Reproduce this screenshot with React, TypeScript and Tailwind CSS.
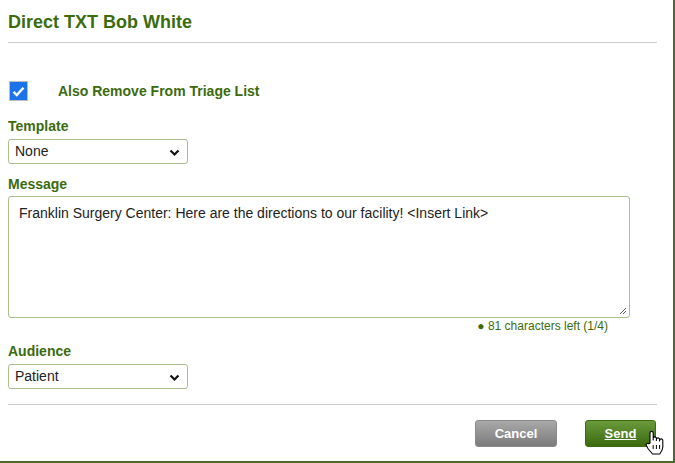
import React from 'react';

const green = 'text-[#3b6b0c]';

const Chevron = () => (
  <svg width="11" height="8" viewBox="0 0 11 8" className="absolute right-[7px] top-[9px]">
    <path d="M1.5 1.5 L5.5 5.5 L9.5 1.5" fill="none" stroke="#111" strokeWidth="2.2" />
  </svg>
);

const SelectBox = ({ value }: { value: string }) => (
  <div className="relative w-[180px] h-[25px] border border-[#a8bf8e] rounded-[3px] bg-white flex items-center pl-[6px] text-[14px] text-[#222]">
    {value}
    <Chevron />
  </div>
);

const HandCursor = () => (
  <svg width="20" height="26" viewBox="0 0 20 26" className="absolute left-[645px] top-[430px]">
    <path
      d="M5 13 V3 a1.6 1.6 0 0 1 3.2 0 V10 V8.5 a1.6 1.6 0 0 1 3.2 0 V10.5 V9.5 a1.6 1.6 0 0 1 3.2 0 V11 V10.5 a1.6 1.6 0 0 1 3.2 0 V17 c0 3 -1.5 5 -3 7 H7.5 c-1.5 -2 -3 -3.5 -4.5 -5.5 L1.3 15.5 a1.5 1.5 0 0 1 2.4 -1.7 Z"
      fill="#fff"
      stroke="#000"
      strokeWidth="1.1"
      strokeLinejoin="round"
    />
    <path d="M8.2 15 V19 M11.4 15 V19 M14.6 15 V19" stroke="#000" strokeWidth="1" />
  </svg>
);

export default function App() {
  return (
    <div
      className="relative w-[675px] h-[463px] bg-white border-r-2 border-b-2 border-[#4b6a2c] overflow-hidden"
      style={{ fontFamily: '"Liberation Sans", Arial, sans-serif' }}
    >
      <div className="pl-[8px] pr-[16px]">
        <h1 className={`pt-[9px] h-[42px] text-[18px] font-bold ${green}`}>Direct TXT Bob White</h1>
        <div className="border-t border-[#cccccc]" />

        <div className="mt-[38px] flex items-center h-[20px]">
          <div className="ml-[1px] w-[19px] h-[20px] border border-[#bdbdbd] bg-[#1a73e8] flex items-center justify-center">
            <svg width="13" height="11" viewBox="0 0 13 11">
              <path d="M1.5 5.8 L4.8 9 L11.5 1.8" fill="none" stroke="#fff" strokeWidth="2.4" />
            </svg>
          </div>
          <span className={`ml-[30px] text-[14px] font-bold ${green}`}>Also Remove From Triage List</span>
        </div>

        <div className={`mt-[16px] text-[14px] font-bold ${green} leading-[18px]`}>Template</div>
        <div className="mt-[4px]">
          <SelectBox value="None" />
        </div>

        <div className={`mt-[11px] text-[14px] font-bold ${green} leading-[18px]`}>Message</div>
        <div className="mt-[3px] relative w-[622px] h-[122px] border border-[#a8bf8e] rounded-[3px] bg-white px-[10px] pt-[6px] text-[14px] text-[#222]">
          Franklin Surgery Center: Here are the directions to our facility! &lt;Insert Link&gt;
          <svg width="9" height="9" viewBox="0 0 9 9" className="absolute right-[2px] bottom-[2px]">
            <path d="M8 2 L2 8 M8 5 L5 8" stroke="#555" strokeWidth="1" />
          </svg>
        </div>
        <div className="w-[600px] flex justify-end mt-[1px] text-[12px] text-[#3b6b0c] leading-[14px]">
          <span>● 81 characters left (1/4)</span>
        </div>

        <div className={`mt-[9px] text-[14px] font-bold ${green} leading-[18px]`}>Audience</div>
        <div className="mt-[4px]">
          <SelectBox value="Patient" />
        </div>

        <div className="mt-[15px] border-t border-[#cccccc]" />

        <div className="mt-[15px] flex justify-end gap-[28px] pr-[1px]">
          <button className="w-[82px] h-[27px] rounded-[3px] border border-[#8a8a8a] bg-gradient-to-b from-[#a9a9a9] to-[#7b7b7b] text-white text-[13px] font-bold">
            Cancel
          </button>
          <button className="w-[71px] h-[27px] rounded-[3px] border border-[#3d6a14] bg-gradient-to-b from-[#6a9a3a] to-[#3b6b0c] text-white text-[13px] font-bold underline">
            Send
          </button>
        </div>
      </div>
      <HandCursor />
    </div>
  );
}
